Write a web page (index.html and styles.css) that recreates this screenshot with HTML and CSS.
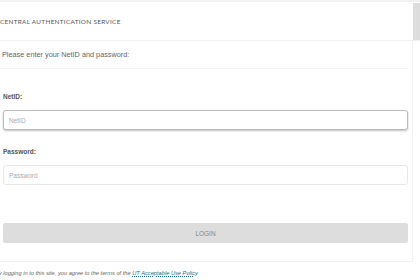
FILE: index.html
```html
<!DOCTYPE html>
<html lang="en">
<head>
    <meta charset="UTF-8">
    <meta name="viewport" content="width=device-width, initial-scale=1.0">
    <title>Central Authentication Service</title>
    <link rel="stylesheet" href="styles.css">
</head>
<body>
    <div class="page">
        <header class="cas-header">
            <div class="cas-title">Central Authentication Service</div>
            <div class="cas-side"></div>
        </header>

        <main class="panel">
            <p class="intro">Please enter your NetID and password:</p>

            <form class="login-form">
                <label for="netid">NetID:</label>
                <input id="netid" class="field focused" type="text" placeholder="NetID">

                <label for="password">Password:</label>
                <input id="password" class="field" type="password" placeholder="Password">

                <button type="submit" class="btn-login">Login</button>
            </form>
        </main>

        <p class="policy">By logging in to this site, you agree to the terms of the <a href="#">UT Acceptable Use Policy</a>.</p>
    </div>
</body>
</html>
```

FILE: styles.css
```css
body {
    margin: 0;
    background: #fff;
    font-family: "Liberation Sans", Arial, sans-serif;
    color: #555;
    overflow: hidden;
}
.page {
    margin-left: -6px;
    width: 426px;
    border-top: 2px solid #f1f1f1;
    padding-top: 1px;
}
.cas-header {
    display: flex;
    height: 37px;
    border-bottom: 1px solid #f0f0f0;
}
.cas-title {
    flex: 1;
    padding-left: 6px;
    display: flex;
    align-items: center;
    font-size: 6.4px;
    letter-spacing: 0.3px;
    text-transform: uppercase;
    color: #555;
    font-family: "Lato", "Open Sans", sans-serif;
}
.cas-side {
    width: 7px;
    background: #ddd;
}
.panel {
    margin-right: 7px;
    border-right: 1px solid #f3f3f3;
    border-bottom: 1px solid #f0f0f0;
    padding: 0 4px 0 0;
}
.intro {
    margin: 0;
    padding: 9px 0 9px 8px;
    line-height: 9px;
    font-size: 7.3px;
    color: #666;
    border-bottom: 1px solid #f3f3f3;
}
.login-form {
    display: flex;
    flex-direction: column;
    padding: 24px 0 18px 9px;
}
.login-form label {
    font-size: 6.5px;
    line-height: 8px;
    font-weight: bold;
    color: #555;
    margin-bottom: 9px;
}
.field {
    box-sizing: border-box;
    height: 20px;
    border: 1px solid #e8e8e8;
    border-radius: 3px;
    padding: 0 5px;
    font-family: inherit;
    font-size: 6.5px;
    color: #555;
    margin-bottom: 18px;
    outline: none;
}
.field::placeholder { color: #aaa; }
.field.focused {
    border: 1px solid #bbb;
    box-shadow: 0 1px 2px rgba(0, 0, 0, 0.25);
}
.btn-login {
    margin-top: 20px;
    height: 20px;
    border: none;
    border-radius: 2px;
    background: #ddd;
    color: #888;
    font-family: inherit;
    font-size: 6.5px;
    text-transform: uppercase;
}
.policy {
    margin: 0;
    padding: 7px 0 0 1px;
    line-height: 8px;
    font-size: 5.7px;
    font-style: italic;
    color: #666;
}
.policy a {
    color: #1f6b7a;
    text-decoration: underline dotted;
}
```
